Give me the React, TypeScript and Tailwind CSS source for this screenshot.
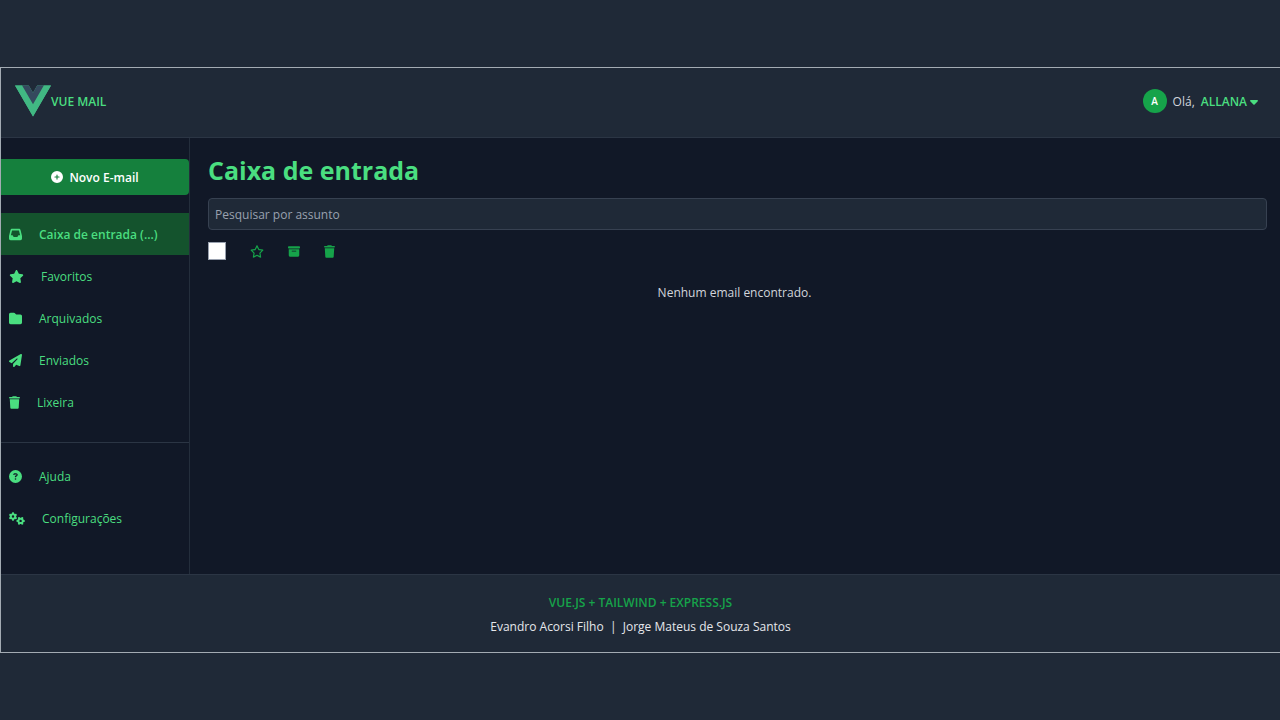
import type { IconType } from "react-icons";
import {
  FaBoxArchive,
  FaCaretDown,
  FaCircleQuestion,
  FaCirclePlus,
  FaFolder,
  FaGears,
  FaInbox,
  FaPaperPlane,
  FaRegStar,
  FaStar,
  FaTrash,
} from "react-icons/fa6";

type IconEntry = { label: string; icon: IconType; width: string };
type NavEntry = IconEntry & { active?: boolean };

const mailboxes: NavEntry[] = [
  { label: "Caixa de entrada (...)", icon: FaInbox, width: "w-[13px]", active: true },
  { label: "Favoritos", icon: FaStar, width: "w-[15px]" },
  { label: "Arquivados", icon: FaFolder, width: "w-[13px]" },
  { label: "Enviados", icon: FaPaperPlane, width: "w-[13px]" },
  { label: "Lixeira", icon: FaTrash, width: "w-[11px]" },
];

const extras: NavEntry[] = [
  { label: "Ajuda", icon: FaCircleQuestion, width: "w-[13px]" },
  { label: "Configurações", icon: FaGears, width: "w-4" },
];

const actions: IconEntry[] = [
  { label: "Favoritar", icon: FaRegStar, width: "w-3.5" },
  { label: "Arquivar", icon: FaBoxArchive, width: "w-3" },
  { label: "Excluir", icon: FaTrash, width: "w-[11px]" },
];

function VueLogo() {
  return (
    <svg viewBox="0 0 256 221" className="h-8 w-9" aria-hidden="true">
      <path fill="#41B883" d="M204.8 0H256L128 220.8 0 0h97.92L128 51.2 157.44 0h47.36Z" />
      <path fill="#41B883" d="m0 0 128 220.8L256 0h-51.2L128 132.48 50.56 0H0Z" />
      <path fill="#35495E" d="M50.56 0 128 133.12 204.8 0h-47.36L128 51.2 97.92 0H50.56Z" />
    </svg>
  );
}

function NavList({ entries }: { entries: NavEntry[] }) {
  return (
    <ul>
      {entries.map(({ label, icon: Icon, width, active }) => (
        <li key={label}>
          <a
            href="#"
            className={
              active
                ? "flex h-[42px] items-center gap-[17px] bg-[#14532d] px-2 font-semibold text-[#4ade80]"
                : "flex h-[42px] items-center gap-[17px] px-2 text-[#4ade80]"
            }
          >
            <Icon className={`h-[13px] shrink-0 ${width}`} />
            <span className="pt-0.5">{label}</span>
          </a>
        </li>
      ))}
    </ul>
  );
}

export default function App() {
  return (
    <div className="flex min-h-screen flex-col justify-center bg-[#1f2937] font-['Open_Sans','Noto_Sans',sans-serif] text-[12px] leading-[18px]">
      <div className="flex flex-col border-y border-l border-[#a3abb3]">
        <header className="flex h-[70px] items-center justify-between border-b border-[#2b3544] pr-[22px] pb-1 pl-[14px]">
          <a href="#" className="flex items-center font-semibold text-[#4ade80]">
            <VueLogo />
            <span className="pt-0.5">VUE MAIL</span>
          </a>
          <button type="button" className="flex items-center text-gray-300">
            <span className="mr-1.5 flex size-6 items-center justify-center rounded-full bg-[#16a34a] text-[10px] font-semibold text-white">
              A
            </span>
            <span className="mr-1.5 pt-0.5">Olá,</span>
            <span className="pt-0.5 font-semibold text-[#4ade80]">ALLANA</span>
            <FaCaretDown className="mt-0.5 ml-[3px] h-[13px] w-2 text-[#4ade80]" />
          </button>
        </header>

        <div className="flex min-h-[436px] bg-[#111827]">
          <aside className="w-[189px] shrink-0 border-r border-[#242e3c] pt-[21px]">
            <button
              type="button"
              className="mb-[18px] flex h-9 w-full items-center justify-center gap-1.5 rounded-r-sm bg-[#15803d] font-semibold text-white"
            >
              <FaCirclePlus className="size-3" />
              <span className="pt-0.5">Novo E-mail</span>
            </button>
            <nav>
              <NavList entries={mailboxes} />
              <hr className="mt-[19px] mb-3 border-[#2b3544]" />
              <NavList entries={extras} />
            </nav>
          </aside>

          <main className="min-w-0 flex-1 pt-4 pr-[13px] pl-[18px]">
            <h1 className="text-[25px] leading-8 font-bold text-[#4ade80]">Caixa de entrada</h1>
            <input
              type="search"
              aria-label="Pesquisar por assunto"
              placeholder="Pesquisar por assunto"
              className="mt-3 block h-8 w-full rounded-sm border border-[#374151] bg-[#1f2937] px-1.5 text-gray-200 placeholder:text-gray-400"
            />
            <div className="mt-3 flex items-center text-[#16a34a]">
              <input
                type="checkbox"
                aria-label="Selecionar todos"
                className="size-[18px] appearance-none border border-gray-400 bg-white checked:bg-[#16a34a]"
              />
              <div className="ml-6 flex items-center gap-6">
                {actions.map(({ label, icon: Icon, width }) => (
                  <button key={label} type="button" aria-label={label}>
                    <Icon className={`h-[13px] ${width}`} />
                  </button>
                ))}
              </div>
            </div>
            <p className="mt-6 pr-1.5 text-center text-gray-300">Nenhum email encontrado.</p>
          </main>
        </div>

        <footer className="flex h-[78px] flex-col items-center justify-center gap-1.5 border-t border-[#2b3544] pt-0.5 text-gray-200">
          <p className="font-semibold text-[#16a34a]">VUE.JS + TAILWIND + EXPRESS.JS</p>
          <p>Evandro Acorsi Filho&nbsp; |&nbsp; Jorge Mateus de Souza Santos</p>
        </footer>
      </div>
    </div>
  );
}
